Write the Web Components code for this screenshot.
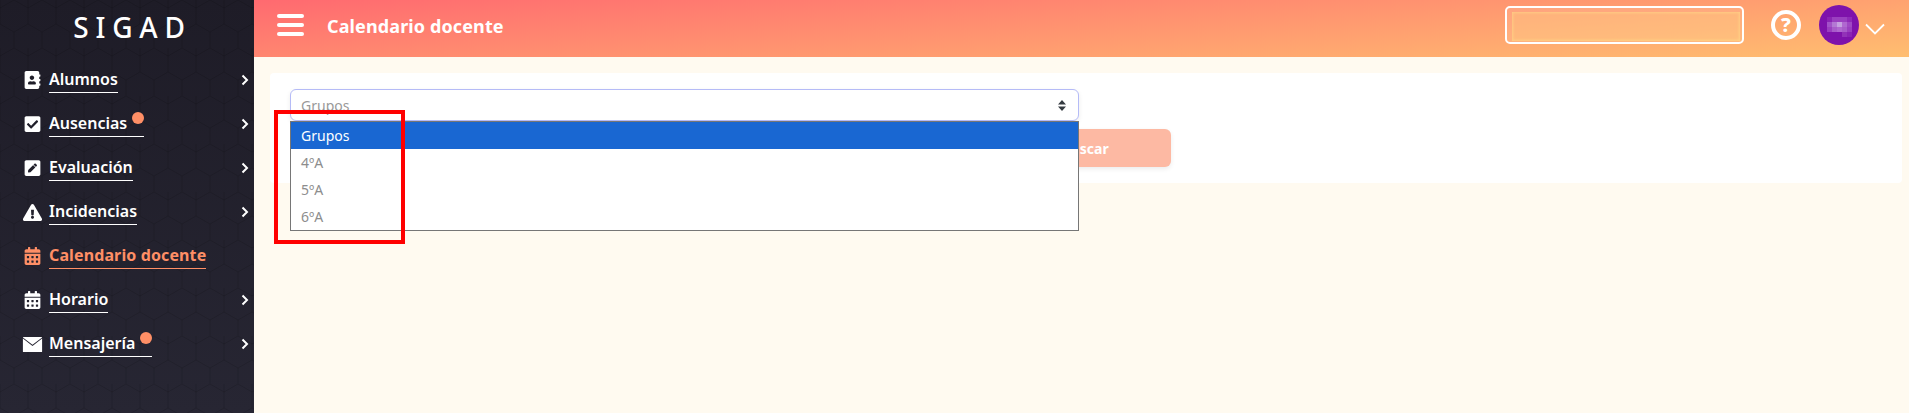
<!DOCTYPE html>
<html lang="es"><head><meta charset="utf-8"><title>SIGAD</title>
<style>
html,body{margin:0;height:100%;overflow:hidden;background:#fffaf0;font-family:"Noto Sans","Open Sans",sans-serif}
</style></head>
<body>
<app-shell>
  <side-nav slot="side">
    <nav-item label="Alumnos" icon="book" arrow></nav-item>
    <nav-item label="Ausencias" icon="check" arrow badge></nav-item>
    <nav-item label="Evaluación" icon="pen" arrow></nav-item>
    <nav-item label="Incidencias" icon="warn" arrow></nav-item>
    <nav-item label="Calendario docente" icon="cal" active></nav-item>
    <nav-item label="Horario" icon="cal" arrow></nav-item>
    <nav-item label="Mensajería" icon="mail" arrow badge></nav-item>
  </side-nav>
  <top-bar slot="top" heading="Calendario docente"></top-bar>
  <filter-card slot="main"></filter-card>
</app-shell>
<script>
const ICONS={
book:['0 0 448 512','M436 160c6.6 0 12-5.4 12-12v-40c0-6.6-5.4-12-12-12h-20V48c0-26.5-21.5-48-48-48H48C21.5 0 0 21.5 0 48v416c0 26.5 21.5 48 48 48h320c26.5 0 48-21.5 48-48v-48h20c6.6 0 12-5.4 12-12v-40c0-6.6-5.4-12-12-12h-20v-64h20c6.6 0 12-5.4 12-12v-40c0-6.6-5.4-12-12-12h-20v-64h20zm-228-32c35.3 0 64 28.7 64 64s-28.7 64-64 64-64-28.7-64-64 28.7-64 64-64zm112 236.8c0 10.6-10 19.2-22.4 19.2H118.4C106 384 96 375.4 96 364.8v-19.2c0-31.8 30.1-57.6 67.2-57.6h5c12.3 5.1 25.7 8 39.8 8s27.6-2.9 39.8-8h5c37.1 0 67.2 25.8 67.2 57.6v19.2z'],
check:['0 0 448 512','M400 480H48c-26.51 0-48-21.49-48-48V80c0-26.51 21.49-48 48-48h352c26.51 0 48 21.49 48 48v352c0 26.51-21.49 48-48 48zm-204.686-98.059l184-184c6.248-6.248 6.248-16.379 0-22.627l-22.627-22.627c-6.248-6.248-16.379-6.249-22.628 0L184 302.745l-69.059-69.059c-6.248-6.248-16.379-6.248-22.628 0L69.686 256.313c-6.248 6.248-6.248 16.379 0 22.627l104 104c6.249 6.25 16.379 6.25 22.628.001z'],
pen:['0 0 448 512','M400 480H48c-26.5 0-48-21.5-48-48V80c0-26.5 21.5-48 48-48h352c26.5 0 48 21.5 48 48v352c0 26.5-21.5 48-48 48zM238.1 177.9L102.4 313.6l-6.3 57.1c-.8 7.6 5.6 14.1 13.3 13.3l57.1-6.3L302.2 242c2.3-2.3 2.3-6.1 0-8.5L246.7 178c-2.5-2.4-6.3-2.4-8.6-.1zM345 165.1L314.9 135c-9.4-9.4-24.6-9.4-33.9 0l-23.1 23.1c-2.3 2.3-2.3 6.1 0 8.5l55.5 55.5c2.3 2.3 6.1 2.3 8.5 0L345 199c9.3-9.3 9.3-24.5 0-33.9z'],
warn:['0 0 576 512','M569.517 440.013C587.975 472.007 564.806 512 527.94 512H48.054c-36.937 0-59.999-40.055-41.577-71.987L246.423 24.035c18.467-32.009 64.72-31.951 83.154 0l239.94 416.028zM288 354c-25.405 0-46 20.595-46 46s20.595 46 46 46 46-20.595 46-46-20.595-46-46-46zm-43.673-165.346l7.418 136c.347 6.364 5.609 11.346 11.982 11.346h48.546c6.373 0 11.635-4.982 11.982-11.346l7.418-136c.375-6.874-5.098-12.654-11.982-12.654h-63.383c-6.884 0-12.356 5.78-11.981 12.654z'],
cal:['0 0 448 512','M0 464c0 26.5 21.5 48 48 48h352c26.5 0 48-21.5 48-48V192H0v272zm320-196c0-6.6 5.4-12 12-12h40c6.6 0 12 5.4 12 12v40c0 6.6-5.4 12-12 12h-40c-6.6 0-12-5.4-12-12v-40zm0 128c0-6.6 5.4-12 12-12h40c6.6 0 12 5.4 12 12v40c0 6.6-5.4 12-12 12h-40c-6.6 0-12-5.4-12-12v-40zM192 268c0-6.6 5.4-12 12-12h40c6.6 0 12 5.4 12 12v40c0 6.6-5.4 12-12 12h-40c-6.6 0-12-5.4-12-12v-40zm0 128c0-6.6 5.4-12 12-12h40c6.6 0 12 5.4 12 12v40c0 6.6-5.4 12-12 12h-40c-6.6 0-12-5.4-12-12v-40zM64 268c0-6.6 5.4-12 12-12h40c6.6 0 12 5.4 12 12v40c0 6.6-5.4 12-12 12H76c-6.6 0-12-5.4-12-12v-40zm0 128c0-6.6 5.4-12 12-12h40c6.6 0 12 5.4 12 12v40c0 6.6-5.4 12-12 12H76c-6.6 0-12-5.4-12-12v-40zM400 64h-48V16c0-8.8-7.2-16-16-16h-32c-8.8 0-16 7.2-16 16v48H160V16c0-8.8-7.2-16-16-16h-32c-8.8 0-16 7.2-16 16v48H48C21.5 64 0 85.5 0 112v48h448v-48c0-26.5-21.5-48-48-48z'],
mail:['0 0 512 400','M0 12Q0 0 14 0h484q14 0 14 12L256 205zM0 42L256 240 512 42V385q0 15-14 15H14q-14 0-14-15z']
};
class AppShell extends HTMLElement{constructor(){super();this.attachShadow({mode:'open'}).innerHTML=`<style>
:host{display:flex;height:100vh;width:100%}
.col{flex:1;min-width:0;display:flex;flex-direction:column}
.content{flex:1;padding:16px 7px 0 16px;position:relative}
</style><slot name="side"></slot><div class="col"><slot name="top"></slot><div class="content"><slot name="main"></slot></div></div>`}}
class SideNav extends HTMLElement{constructor(){super();this.attachShadow({mode:'open'}).innerHTML=`<style>
:host{display:block;flex:0 0 254px;width:254px;position:relative;background:linear-gradient(180deg,#1e1c27,#272633);color:#fff;overflow:hidden}
svg{position:absolute;inset:0;width:100%;height:100%;pointer-events:none}
.logo{position:relative;height:58px;display:flex;align-items:center;justify-content:center;font-size:28px;font-weight:500;line-height:1;letter-spacing:6.8px;padding:0 0 4px 11px;box-sizing:border-box}
.list{position:relative}
</style><svg aria-hidden="true"><defs><pattern id="h" width="28" height="48" patternUnits="userSpaceOnUse"><path d="M14 0l14 8v16L14 32 0 24V8zM14 32v16M0 8v-8M28 8v-8" fill="none" stroke="#000" stroke-opacity=".13"/></pattern></defs><rect width="100%" height="100%" fill="url(#h)"/></svg>
<div class="logo">SIGAD</div><div class="list"><slot></slot></div>`}}
class NavItem extends HTMLElement{constructor(){super();this.attachShadow({mode:'open'})}
connectedCallback(){const a=n=>this.hasAttribute(n),k=this.getAttribute('icon'),i=ICONS[k];
this.shadowRoot.innerHTML=`<style>
:host{display:flex;align-items:flex-start;height:44px;box-sizing:border-box;padding:10px 5px 0 23px;color:${a('active')?'#ff8f66':'#fff'};font-size:16px;font-weight:600}
.ic{flex:0 0 18px;width:18px;display:flex;justify-content:center;align-items:center;height:22px;margin:1px 8px 0 0}
.ic svg{flex:none;height:${k=='mail'?15:k=='warn'?17:18}px;width:${k=='warn'||k=='mail'?21:17}px;fill:currentColor;display:block}
.lb{position:relative;line-height:22px;height:24px;border-bottom:1.5px solid currentColor;white-space:nowrap;${a('badge')?'padding-right:17px':''};${a('active')?'font-weight:700;letter-spacing:.12px;':''}}
.dot{position:absolute;right:0;top:0;width:12px;height:12px;border-radius:50%;background:#ff8f66}
.ar{margin-left:auto;height:24px;display:flex;align-items:center}
.ar svg{width:8px;height:12px;display:block}
</style><span class="ic"><svg viewBox="${i[0]}"><path d="${i[1]}"/></svg></span><span class="lb">${this.getAttribute('label')}${a('badge')?'<span class="dot"></span>':''}</span>${a('arrow')?'<span class="ar"><svg viewBox="0 0 8 12"><path d="M1.5 1.5L6 6l-4.5 4.5" fill="none" stroke="#fff" stroke-width="2"/></svg></span>':''}`}}
class TopBar extends HTMLElement{constructor(){super();this.attachShadow({mode:'open'})}
connectedCallback(){
const px=[['#8a24b4','#9a3fc0','#9a3fc0','#9a3fc0','#8e2ab8'],['#a252c8','#b478d4','#c6a0e0','#b068d0','#9f48c4'],['#9a3fc0','#a85cca','#b068d0','#a85cca','#9a3fc0'],['#7e12ab','#7e12ab','#7e12ab','#9232b8','#8a24b4']];
let r='';px.forEach((row,y)=>row.forEach((c,x)=>{r+=`<rect x="${8+x*5}" y="${12+y*5}" width="5" height="5" fill="${c}"/>`}));
this.shadowRoot.innerHTML=`<style>
:host{display:flex;align-items:center;height:57px;flex:0 0 57px;box-sizing:border-box;padding:0 24px 7px 23px;background:linear-gradient(176deg,#ff6a70 0%,#ffbe70 100%);color:#fff}
.burger{display:flex;flex-direction:column;gap:5px;width:27px;margin-right:23px}
.burger i{display:block;height:4px;border-radius:2px;background:#fff}
h1{margin:0;font-size:18px;font-weight:700;letter-spacing:.12px;line-height:1;white-space:nowrap;position:relative;top:1px}
.search{margin-left:auto;width:239px;height:38px;box-sizing:border-box;border:2px solid #fff;border-radius:5px;padding:4px 2px 1px 5px;background:rgba(255,255,255,.1)}
.search div{height:100%;background:rgba(255,205,120,.32);box-shadow:inset 0 0 3px 1px rgba(255,225,140,.55)}
.help{margin-left:27px;width:30px;height:30px;box-sizing:border-box;border:4px solid #fff;border-radius:50%;display:flex;align-items:center;justify-content:center;font-size:20px;font-weight:800;line-height:1}
.av{margin-left:18px;width:40px;height:40px;display:block}
.ch{margin-left:6px;margin-top:7px;width:20px;height:12px;display:block}
</style><div class="burger"><i></i><i></i><i></i></div><h1>${this.getAttribute('heading')}</h1>
<div class="search"><div></div></div><div class="help">?</div>
<svg class="av" viewBox="0 0 40 40"><defs><clipPath id="c"><circle cx="20" cy="20" r="20"/></clipPath></defs><g clip-path="url(#c)"><rect width="40" height="40" fill="#7e12ab"/>${r}</g></svg>
<svg class="ch" viewBox="0 0 20 12"><path d="M1 1.5l9 9 9-9" fill="none" stroke="#fff" stroke-width="1.8"/></svg>`}}
class FilterCard extends HTMLElement{constructor(){super();this.attachShadow({mode:'open'}).innerHTML=`<style>
:host{display:block;position:relative;background:#fff;border-radius:4px;padding:16px 20px;height:110px;box-sizing:border-box}
.sel{position:relative;width:789px;height:32px;box-sizing:border-box;border:1px solid #b5bbf7;border-radius:6px;background:#fff;box-shadow:0 2px 5px rgba(0,0,0,.08);display:flex;align-items:center;padding:0 10px;font-size:14px;color:#999;z-index:1}
.sel svg{margin-left:auto;margin-right:2px;width:8px;height:11px;fill:#343a40}
.btn{display:flex;align-items:center;justify-content:center;box-sizing:border-box;width:174px;height:38px;margin:8px 0 0 707px;padding-left:2px;border-radius:6px;background:#fdb9a3;color:#fff;font-size:14px;font-weight:700;box-shadow:0 2px 5px rgba(0,0,0,.08)}
.drop{position:absolute;z-index:2;left:0;right:0;top:31px;margin:0 -1px;box-sizing:border-box;border:1px solid #767676;background:#fff;font-size:14px;color:#8d8d8d}
.drop div{height:27px;line-height:27px;padding-left:10px}
.drop div.on{background:#1967d2;color:#fff;}
.mark{position:absolute;z-index:3;left:4px;top:37px;width:130.5px;height:134px;box-sizing:border-box;border:4px solid #f00;pointer-events:none}
</style><div class="sel">Grupos<svg viewBox="0 0 8 11"><path d="M4 0l4 4.5H0zM4 11L0 6.5h8z"/></svg>
<div class="drop"><div class="on">Grupos</div><div>4ºA</div><div>5ºA</div><div>6ºA</div></div></div>
<div class="btn">Buscar</div><div class="mark"></div>`}}
customElements.define('app-shell',AppShell);customElements.define('side-nav',SideNav);customElements.define('nav-item',NavItem);customElements.define('top-bar',TopBar);customElements.define('filter-card',FilterCard);
</script>
</body></html>
